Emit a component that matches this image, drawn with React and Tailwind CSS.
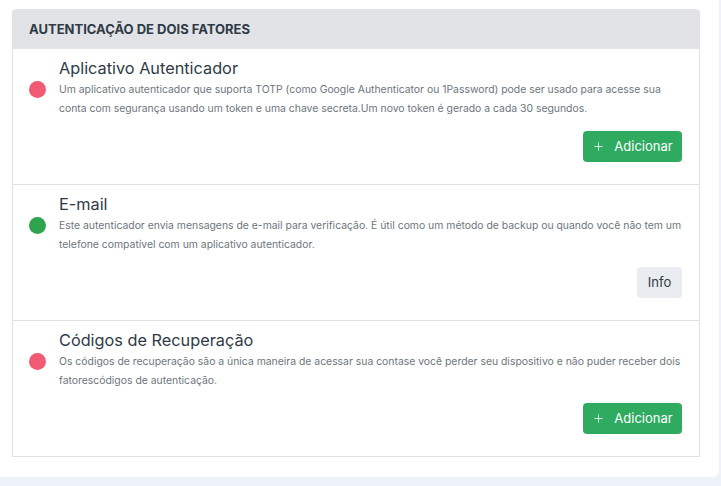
import { Plus } from "lucide-react";

const metodos = [
  {
    titulo: "Aplicativo Autenticador",
    linhas: [
      "Um aplicativo autenticador que suporta TOTP (como Google Authenticator ou 1Password) pode ser usado para acesse sua",
      "conta com segurança usando um token e uma chave secreta.Um novo token é gerado a cada 30 segundos.",
    ],
    ativo: false,
    acao: "adicionar",
  },
  {
    titulo: "E-mail",
    linhas: [
      "Este autenticador envia mensagens de e-mail para verificação. É útil como um método de backup ou quando você não tem um",
      "telefone compatível com um aplicativo autenticador.",
    ],
    ativo: true,
    acao: "info",
  },
  {
    titulo: "Códigos de Recuperação",
    linhas: [
      "Os códigos de recuperação são a única maneira de acessar sua contase você perder seu dispositivo e não puder receber dois",
      "fatorescódigos de autenticação.",
    ],
    ativo: false,
    acao: "adicionar",
  },
];

const App = () => {
  return (
    <div className="min-h-[486px] bg-[#eef2f9] font-['Inter',sans-serif]">
      <div className="w-[719px] h-[477px] bg-white rounded-br-md pl-3 pt-[9px]">
        <div className="w-[688px] border border-[#dee2e6] rounded-t">
          <div className="h-[39px] bg-[#e1e3e7] px-4 flex items-center">
            <h2 className="text-[13px] font-bold text-[#2f3a46] uppercase">Autenticação de dois fatores</h2>
          </div>

          {metodos.map((m, i) => (
            <div
              key={m.titulo}
              className={
                i < metodos.length - 1
                  ? "h-[136px] border-b border-[#dee2e6] px-4 pt-[9px]"
                  : "h-[135px] px-4 pt-[9px]"
              }
            >
              <div className="flex items-center gap-[13px]">
                <span
                  className={
                    m.ativo
                      ? "w-[17px] h-[17px] rounded-full bg-[#2ea44f] shrink-0 mt-[3px]"
                      : "w-[17px] h-[17px] rounded-full bg-[#f05a72] shrink-0 mt-[3px]"
                  }
                />
                <div className="flex-1">
                  <h3 className="text-[16.3px] leading-5 text-[#2f3a46]">{m.titulo}</h3>
                  <p className="mt-[3px] text-[10.4px] leading-[18.5px] text-[#6c757d] whitespace-nowrap">
                    {m.linhas[0]}
                    <br />
                    {m.linhas[1]}
                  </p>
                </div>
              </div>
              <div className="flex justify-end mt-[13px] pr-px">
                {m.acao === "adicionar" ? (
                  <button className="h-[31px] w-[99px] rounded bg-[#2eab5f] text-white text-[13px] flex items-center justify-center gap-[9px]">
                    <Plus className="w-[13px] h-[13px]" strokeWidth={1.4} />
                    Adicionar
                  </button>
                ) : (
                  <button className="h-[31px] w-[45px] rounded bg-[#e9edf1] text-[#343a40] text-[13px]">
                    Info
                  </button>
                )}
              </div>
            </div>
          ))}
        </div>
      </div>
    </div>
  );
};

export default App;
